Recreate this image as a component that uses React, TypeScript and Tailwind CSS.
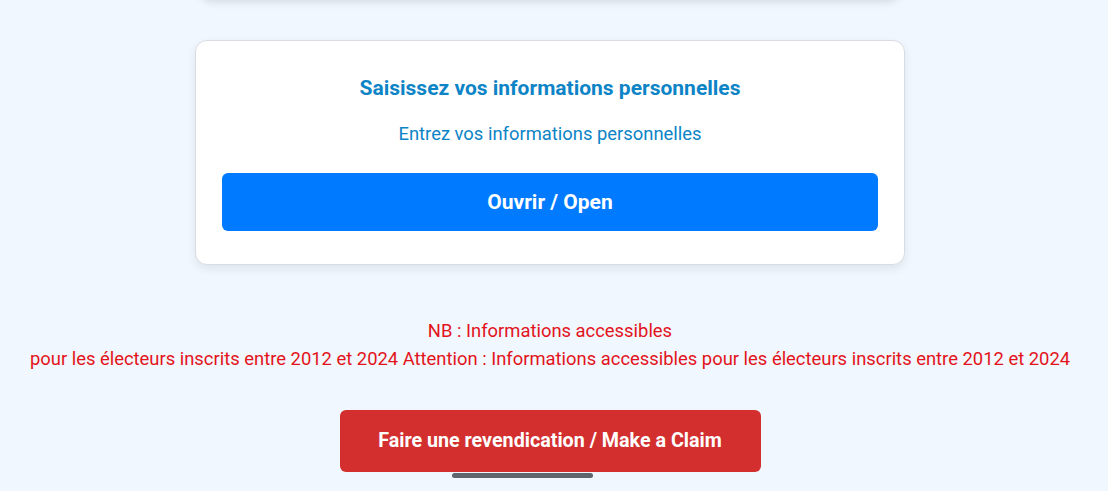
export default function App() {
  return (
    <div
      className="min-h-screen bg-[#f0f7fe] overflow-hidden"
      style={{ fontFamily: "Roboto, 'Noto Sans', sans-serif" }}
    >
      <div className="flex flex-col items-center pr-[8px]">
        {/* previous card, mostly scrolled out of view */}
        <div className="-mt-[60px] h-[60px] w-[700px] rounded-xl bg-white shadow-[0_2px_8px_rgba(0,0,0,0.12)]" />

        <div className="mt-[40px] w-[710px] rounded-xl border border-[#d9dde2] bg-white px-[26px] pt-[33px] pb-[33px] text-center shadow-[0_4px_10px_rgba(0,0,0,0.08)]">
          <h2 className="text-[21px] leading-[28px] font-bold text-[#0c84c6]">
            Saisissez vos informations personnelles
          </h2>
          <p className="mt-[18px] text-[18.4px] leading-[27px] text-[#0c84c6]">
            Entrez vos informations personnelles
          </p>
          <button className="mt-[26px] h-[58px] w-full rounded-md bg-[#007bff] pt-[2px] text-[21px] font-bold text-white">
            Ouvrir / Open
          </button>
        </div>

        <p className="mt-[52px] text-center text-[18.4px] leading-[28px] text-[#e3131b]">
          NB : Informations accessibles
          <br />
          pour les électeurs inscrits entre 2012 et 2024 Attention : Informations accessibles pour les électeurs inscrits entre 2012 et 2024
        </p>

        <button className="mt-[37px] h-[62px] w-[421px] rounded-md bg-[#d32f2f] text-[19.7px] font-bold text-white">
          Faire une revendication / Make a Claim
        </button>
      </div>

      {/* gesture bar */}
      <div className="fixed left-[452px] top-[473px] h-[5px] w-[141px] rounded-full bg-[#60656b]" />
    </div>
  );
}
